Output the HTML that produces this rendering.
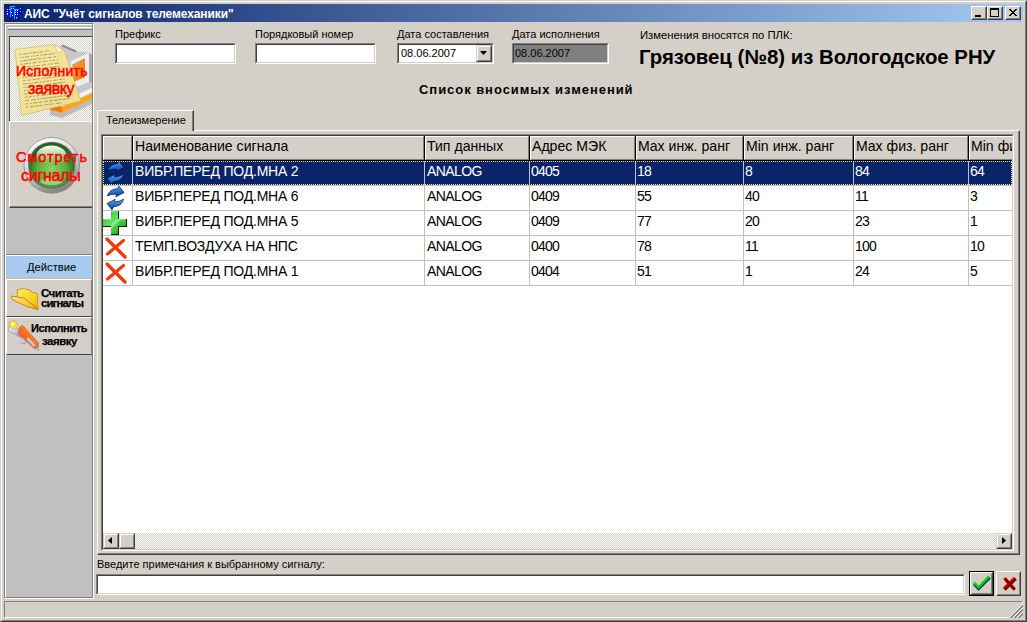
<!DOCTYPE html><html><head><meta charset="utf-8"><style>
*{margin:0;padding:0;box-sizing:border-box}
html,body{width:1027px;height:622px;overflow:hidden;background:#D4D0C8;font-family:"Liberation Sans",sans-serif;font-size:11px;color:#000;position:relative}
.a{position:absolute}
.t{position:absolute;white-space:pre;line-height:1}
.sunk{position:absolute;border:1px solid;border-color:#808080 #FFFFFF #FFFFFF #808080;background:#fff}
.sunk>i{position:absolute;left:0;top:0;right:0;bottom:0;border:1px solid;border-color:#404040 #D4D0C8 #D4D0C8 #404040}
.chk{background-color:#fff;background-image:repeating-conic-gradient(#D4D0C8 0 25%,#fff 0 50%);background-size:2px 2px}
.btn{position:absolute;background:#D4D0C8;border:1px solid;border-color:#FFFFFF #404040 #404040 #FFFFFF}
.btn>i{position:absolute;left:0;top:0;right:0;bottom:0;border:1px solid;border-color:#D4D0C8 #808080 #808080 #D4D0C8}
.g{position:absolute;white-space:pre;line-height:1;font-size:13.5px}
</style></head><body>
<div class="a" style="left:0px;top:0px;width:1027px;height:622px;border:1px solid;border-color:#D4D0C8 #404040 #404040 #D4D0C8"></div>
<div class="a" style="left:1px;top:1px;width:1025px;height:620px;border:1px solid;border-color:#FFFFFF #808080 #808080 #FFFFFF"></div>
<div class="a" style="left:4px;top:4px;width:1019px;height:18px;background:linear-gradient(to right,#0A246A,#A6CAF0)"></div>
<svg class="a" style="left:4px;top:4px" width="20" height="18" viewBox="0 0 20 18">
<rect x="13" y="3" width="4.5" height="8" fill="#0000E0"/>
<rect x="2" y="4" width="5" height="8" fill="#0010FF"/>
<rect x="6" y="2" width="5" height="11" fill="#0020FF"/>
<rect x="6" y="2" width="5" height="1" fill="#10C8FF"/><rect x="6" y="2" width="1" height="11" fill="#10A0FF"/>
<rect x="10" y="5" width="5" height="10" fill="#0010FF"/>
<rect x="10" y="5" width="5" height="1" fill="#10C8FF"/><rect x="10" y="5" width="1" height="10" fill="#3090FF"/>
<g fill="#FFE800">
<rect x="3" y="5" width="1" height="1"/><rect x="5" y="5" width="1" height="1"/><rect x="3" y="7" width="1" height="1"/><rect x="3" y="9" width="1" height="2"/>
<rect x="7" y="4" width="1" height="1"/><rect x="9" y="4" width="1" height="1"/><rect x="7" y="8" width="1" height="1"/><rect x="8" y="11" width="1" height="1"/>
<rect x="11" y="6" width="1" height="1"/><rect x="13" y="6" width="1" height="1"/><rect x="11" y="8" width="1" height="1"/><rect x="13" y="8" width="1" height="1"/><rect x="11" y="10" width="1" height="1"/><rect x="13" y="10" width="1" height="1"/><rect x="12" y="13" width="1" height="1.5"/>
<rect x="16" y="4" width="1" height="1"/><rect x="16" y="7" width="1" height="1"/>
</g></svg>
<div class="t" style="left:24px;top:8px;font-size:12px;font-weight:bold;color:#fff;letter-spacing:-0.1px">АИС "Учёт сигналов телемеханики"</div>
<div class="btn" style="left:971px;top:6px;width:16px;height:14px"><i></i></div>
<div class="btn" style="left:987px;top:6px;width:16px;height:14px"><i></i></div>
<div class="btn" style="left:1005px;top:6px;width:16px;height:14px"><i></i></div>
<div class="a" style="left:975px;top:15px;width:6px;height:2px;background:#000"></div>
<div class="a" style="left:990px;top:8px;width:9px;height:9px;border:1px solid #000;border-top-width:2px"></div>
<svg class="a" style="left:0;top:0" width="1027" height="30" shape-rendering="crispEdges"><path d="M1009 9h1v1h-1zM1010 9h1v1h-1zM1015 9h1v1h-1zM1016 9h1v1h-1zM1010 10h1v1h-1zM1011 10h1v1h-1zM1014 10h1v1h-1zM1015 10h1v1h-1zM1011 11h1v1h-1zM1012 11h1v1h-1zM1013 11h1v1h-1zM1014 11h1v1h-1zM1012 12h1v1h-1zM1013 12h1v1h-1zM1011 13h1v1h-1zM1012 13h1v1h-1zM1013 13h1v1h-1zM1014 13h1v1h-1zM1010 14h1v1h-1zM1011 14h1v1h-1zM1014 14h1v1h-1zM1015 14h1v1h-1zM1009 15h1v1h-1zM1010 15h1v1h-1zM1015 15h1v1h-1zM1016 15h1v1h-1z" fill="#000"/></svg>
<div class="a" style="left:4px;top:23px;width:90px;height:576px;border:1px solid;border-color:#808080 #FFFFFF #FFFFFF #808080"></div>
<div class="a" style="left:5px;top:24px;width:88px;height:574px;border:1px solid;border-color:#FFFFFF #808080 #808080 #FFFFFF;background:#C0C0C0"></div>
<div class="a" style="left:8px;top:27px;width:84px;height:3px;border-top:1px solid #fff;border-bottom:1px solid #808080;background:#D4D0C8"></div>
<div class="a" style="left:9px;top:36px;width:83px;height:86px;border-top:1px solid #404040;border-left:1px solid #404040;border-bottom:1px solid #fff;background-color:#fff;background-image:repeating-conic-gradient(#D4D0C8 0 25%,#fff 0 50%);background-size:2px 2px"></div>
<div class="a" style="left:9px;top:121px;width:83px;height:87px;background:#D4D0C8;border-top:1px solid #fff;border-left:1px solid #fff;border-bottom:1px solid #404040;box-shadow:inset 0 -1px #808080"></div>
<div class="a" style="left:6px;top:254px;width:86px;height:23px;border-top:1px solid #808080;background:#A6CAF0;box-shadow:inset 0 1px #fff"></div>
<div class="t" style="left:27px;top:262px;font-size:11.2px">Действие</div>
<div class="a" style="left:6px;top:279px;width:86px;height:38px;background:#D4D0C8;border-top:1px solid #fff;border-left:1px solid #fff;border-bottom:1px solid #404040;border-right:1px solid #808080"></div>
<div class="a" style="left:6px;top:317px;width:86px;height:38px;background:#D4D0C8;border-top:1px solid #fff;border-left:1px solid #fff;border-bottom:1px solid #404040;border-right:1px solid #808080"></div>
<svg class="a" style="left:9px;top:36px" width="83" height="86" viewBox="9 36 83 86">
<defs>
<linearGradient id="scr" x1="0" y1="0" x2="1" y2="1"><stop offset="0" stop-color="#FFB040"/><stop offset="1" stop-color="#E86A00"/></linearGradient>
<linearGradient id="mon" x1="0" y1="0" x2="1" y2="0"><stop offset="0" stop-color="#A8A8A8"/><stop offset="0.5" stop-color="#E8E8E8"/><stop offset="1" stop-color="#B0B0B0"/></linearGradient>
<linearGradient id="pap" x1="0" y1="0" x2="1" y2="1"><stop offset="0" stop-color="#F6E9A6"/><stop offset="1" stop-color="#EEDC88"/></linearGradient>
</defs>
<path d="M60 45 L76 51 L88 52 L92 54 L92 103 L62 117 L50 113 L50 100 Z" fill="#D4D4D4"/>
<path d="M61 45.5 L76 51.5 L87 52.5 L85 56 L71 62 L58 55 Z" fill="#C8C8C8"/>
<path d="M62 45.5 L76 51.5" stroke="#8C8C8C" stroke-width="2"/>
<path d="M71 61 L86 54 L89 53.5 L89 82 L72 89 Z" fill="#EEEEEE"/>
<path d="M72.5 65 L85 58.5 L85 77 L72.5 82.5 Z" fill="url(#scr)"/>
<path d="M72.5 65 L85 58.5" stroke="#505050" stroke-width="0.8" stroke-dasharray="1 1"/>
<path d="M89 53 L92 55 L92 82 L89 82 Z" fill="#A8A8A8"/>
<path d="M72 89 L89 82 L92 82 L92 88 L66 99 L58 96 Z" fill="#C8C8C8"/>
<path d="M58 103 L62 106 L92 92 L92 88 Z" fill="#F4F4F4"/>
<path d="M50 104 L62 107 L92 93 L92 99 L62 113 L50 110 Z" fill="#FFA418"/>
<path d="M50 104 L62 107 L62 113 L50 110 Z" fill="#F07A10"/>
<path d="M50 110 L62 113 L92 99 L92 104 L62 118 L50 115 Z" fill="#BCBCBC"/>
<path d="M15 49.5 L54.5 44.5 L64.5 51 L81 101 L21.5 115.5 Z" fill="url(#pap)" stroke="#C8B060" stroke-width="0.6"/>
<path d="M54.5 44.5 L57.5 53 L64.5 51 Z" fill="#FBF3CC" stroke="#C8B060" stroke-width="0.5"/>
<g stroke="#6E6040" stroke-width="1" opacity="0.55"><path d="M19.5 54.50 L22.0 54.19 M23.0 54.06 L26.0 53.69 M26.8 53.59 L28.3 53.40 M29.1 53.30 L31.6 52.99 M32.4 52.89 L36.4 52.39 M37.4 52.26 L38.9 52.08 M39.7 51.98 L42.7 51.60 M44.7 51.35 L46.2 51.16 M47.2 51.04 L48.7 50.85 M19.9 57.80 L21.4 57.61 M22.2 57.51 L24.2 57.26 M25.0 57.16 L29.0 56.66 M31.0 56.41 L32.5 56.22 M33.5 56.10 L35.0 55.91 M36.0 55.79 L38.5 55.47 M40.5 55.22 L42.5 54.97 M43.3 54.88 L47.3 54.38 M48.5 54.22 L52.5 53.72 M53.5 53.60 L55.0 53.41 M20.3 61.10 L22.8 60.79 M23.6 60.69 L27.6 60.19 M28.4 60.09 L32.4 59.59 M33.2 59.49 L37.2 58.99 M38.2 58.86 L41.2 58.49 M43.2 58.24 L45.7 57.93 M47.7 57.68 L51.7 57.18 M53.7 56.92 L56.2 56.61 M20.7 64.40 L22.7 64.15 M23.7 64.03 L28.7 63.40 M29.7 63.28 L31.2 63.09 M32.4 62.94 L36.4 62.44 M38.4 62.19 L40.9 61.88 M42.9 61.63 L45.4 61.31 M46.2 61.21 L47.7 61.03 M49.7 60.78 L51.7 60.53 M52.9 60.38 L54.9 60.13 M56.9 59.88 L58.1 59.72 M21.1 67.70 L26.1 67.08 M26.9 66.98 L30.9 66.48 M32.1 66.33 L34.6 66.01 M35.8 65.86 L39.8 65.36 M41.8 65.11 L45.8 64.61 M47.8 64.36 L49.3 64.17 M50.1 64.08 L52.6 63.76 M54.6 63.51 L59.2 62.94 M21.5 71.00 L23.0 70.81 M24.2 70.66 L29.2 70.04 M31.2 69.79 L33.7 69.47 M35.7 69.22 L40.7 68.60 M41.9 68.45 L43.4 68.26 M45.4 68.01 L47.9 67.70 M48.9 67.58 L52.9 67.08 M53.7 66.97 L56.7 66.60 M57.5 66.50 L59.5 66.25 M21.9 74.30 L23.9 74.05 M24.9 73.92 L27.9 73.55 M29.9 73.30 L32.9 72.92 M33.7 72.83 L35.7 72.58 M37.7 72.33 L40.7 71.95 M41.9 71.80 L43.9 71.55 M45.9 71.30 L49.9 70.80 M51.1 70.65 L56.1 70.02 M58.1 69.77 L60.6 69.46 M22.3 77.60 L24.3 77.35 M25.3 77.22 L26.8 77.04 M27.8 76.91 L29.8 76.66 M30.8 76.54 L35.8 75.91 M36.8 75.79 L38.3 75.60 M40.3 75.35 L44.3 74.85 M45.3 74.72 L47.8 74.41 M49.0 74.26 L50.5 74.07 M51.5 73.95 L54.5 73.57 M55.7 73.42 L59.7 72.92 M60.9 72.77 L62.4 72.59 M22.7 80.90 L25.7 80.53 M27.7 80.28 L30.7 79.90 M32.7 79.65 L35.7 79.28 M36.5 79.18 L39.5 78.80 M41.5 78.55 L43.0 78.36 M44.0 78.24 L45.5 78.05 M46.5 77.93 L49.5 77.55 M50.5 77.43 L52.0 77.24 M53.2 77.09 L57.2 76.59 M58.0 76.49 L59.5 76.30 M60.3 76.20 L63.4 75.81 M23.1 84.20 L27.1 83.70 M27.9 83.60 L30.4 83.29 M31.2 83.19 L32.7 83.00 M33.7 82.88 L37.7 82.38 M39.7 82.12 L41.7 81.88 M42.9 81.73 L45.4 81.41 M46.6 81.26 L49.6 80.89 M50.4 80.79 L51.9 80.60 M53.9 80.35 L56.9 79.98 M58.9 79.73 L61.9 79.35 M63.1 79.20 L64.5 79.03 M23.5 87.50 L25.0 87.31 M26.2 87.16 L31.2 86.54 M32.4 86.39 L35.4 86.01 M36.4 85.89 L40.4 85.39 M41.2 85.29 L43.2 85.04 M44.4 84.89 L46.4 84.64 M47.2 84.54 L51.2 84.04 M52.4 83.89 L57.4 83.26 M58.2 83.16 L63.2 82.54 M64.4 82.39 L65.5 82.25 M23.9 90.80 L25.9 90.55 M27.1 90.40 L29.1 90.15 M30.3 90.00 L35.3 89.38 M36.3 89.25 L40.3 88.75 M41.3 88.62 L43.3 88.38 M45.3 88.12 L50.3 87.50 M51.3 87.38 L53.3 87.12 M55.3 86.88 L57.8 86.56 M58.6 86.46 L60.1 86.27 M61.3 86.12 L64.3 85.75 M65.5 85.60 L66.5 85.47 M24.3 94.10 L27.3 93.72 M28.5 93.57 L31.0 93.26 M31.8 93.16 L33.8 92.91 M34.6 92.81 L36.6 92.56 M38.6 92.31 L40.6 92.06 M41.8 91.91 L43.8 91.66 M45.8 91.41 L49.8 90.91 M50.6 90.81 L53.6 90.44 M54.8 90.29 L59.8 89.66 M60.6 89.56 L65.6 88.94 M66.4 88.84 L67.6 88.69 M24.7 97.40 L27.7 97.03 M28.7 96.90 L31.7 96.53 M32.9 96.38 L34.4 96.19 M36.4 95.94 L39.4 95.56 M41.4 95.31 L46.4 94.69 M47.2 94.59 L52.2 93.96 M53.2 93.84 L55.2 93.59 M56.2 93.46 L57.7 93.28 M58.7 93.15 L62.7 92.65 M64.7 92.40 L68.7 91.91 M25.1 100.70 L29.1 100.20 M31.1 99.95 L36.1 99.32 M37.3 99.17 L39.3 98.92 M40.3 98.80 L41.8 98.61 M42.6 98.51 L47.6 97.89 M48.4 97.79 L52.4 97.29 M53.4 97.16 L56.4 96.79 M57.4 96.66 L59.4 96.41 M60.2 96.31 L62.7 96.00 M63.7 95.87 L66.2 95.56 M67.2 95.44 L69.7 95.12 M25.5 104.00 L28.0 103.69 M30.0 103.44 L32.0 103.19 M32.8 103.09 L37.8 102.46 M39.0 102.31 L42.0 101.94 M44.0 101.69 L48.0 101.19 M49.0 101.06 L53.0 100.56 M54.0 100.44 L58.0 99.94 M58.8 99.84 L61.8 99.46 M62.8 99.34 L66.8 98.84 M67.6 98.74 L69.6 98.49 M25.9 107.30 L27.9 107.05 M29.9 106.80 L33.9 106.30 M34.7 106.20 L38.7 105.70 M39.5 105.60 L42.0 105.29 M44.0 105.04 L45.5 104.85 M46.3 104.75 L48.3 104.50 M49.3 104.38 L51.8 104.06 M52.6 103.96 L54.1 103.78 M56.1 103.53 L60.1 103.03 M60.9 102.92 L62.0 102.79"/></g>
</svg>
<div class="t" style="left:16px;top:64px;font-size:14px;color:#FF0000;letter-spacing:0.25px;-webkit-text-stroke:0.5px #FF0000">Исполнить</div>
<div class="t" style="left:28px;top:81px;font-size:16px;color:#FF0000;letter-spacing:-0.4px;-webkit-text-stroke:0.5px #FF0000">заявку</div>
<svg class="a" style="left:9px;top:121px" width="83" height="87" viewBox="9 121 83 87">
<defs>
<linearGradient id="ring" x1="0.3" y1="0" x2="0.7" y2="1"><stop offset="0" stop-color="#FFFFFF"/><stop offset="0.5" stop-color="#D0D0D0"/><stop offset="1" stop-color="#787878"/></linearGradient>
<linearGradient id="ring2" x1="0.2" y1="0" x2="0.8" y2="1"><stop offset="0" stop-color="#808080"/><stop offset="1" stop-color="#F0F0F0"/></linearGradient>
<radialGradient id="grn" cx="0.5" cy="0.6" r="0.55"><stop offset="0" stop-color="#86D466"/><stop offset="0.6" stop-color="#5AAE3A"/><stop offset="1" stop-color="#22621A"/></radialGradient>
<linearGradient id="hl" x1="0" y1="0" x2="0" y2="1"><stop offset="0" stop-color="#FFFFFF" stop-opacity="1"/><stop offset="0.35" stop-color="#E0F4D8" stop-opacity="0.8"/><stop offset="1" stop-color="#A8E090" stop-opacity="0"/></linearGradient>
</defs>
<circle cx="51.75" cy="165.25" r="28.2" fill="url(#ring)"/>
<circle cx="51.75" cy="165.25" r="27.8" fill="none" stroke="#8C8C8C" stroke-width="0.9"/>
<circle cx="51.75" cy="165.25" r="23.6" fill="#6A6A6A"/>
<circle cx="51.75" cy="165.25" r="22.4" fill="url(#grn)"/>
<ellipse cx="51.5" cy="155.5" rx="15" ry="10" fill="url(#hl)"/>
<ellipse cx="51.5" cy="181.5" rx="11" ry="3.5" fill="#D8F4C8" opacity="0.5"/>
</svg>
<div class="t" style="left:16px;top:150px;font-size:14.5px;color:#FF0000;letter-spacing:0.9px;-webkit-text-stroke:0.5px #FF0000">Смотреть</div>
<div class="t" style="left:21px;top:168px;font-size:16px;color:#FF0000;letter-spacing:-0.25px;-webkit-text-stroke:0.5px #FF0000">сигналы</div>
<svg class="a" style="left:9px;top:286px" width="32" height="26" viewBox="9 286 32 26">
<defs><linearGradient id="fol" x1="0" y1="0" x2="1" y2="1"><stop offset="0" stop-color="#FFF060"/><stop offset="0.6" stop-color="#F8D020"/><stop offset="1" stop-color="#F0B000"/></linearGradient>
<linearGradient id="fol2" x1="0" y1="0" x2="1" y2="0.5"><stop offset="0" stop-color="#FFE880"/><stop offset="1" stop-color="#F4C020"/></linearGradient></defs>
<path d="M17 290 L23 288.5 L30 290 L31 292 L37.5 293.5 L38 310 L28 306 L17.5 297 Z" fill="url(#fol)" stroke="#C88020" stroke-width="0.8"/>
<path d="M11 296 L24 298 L30 303 L36 306.5 L37 308.5 L28 307 L17 302 L12 299 Z" fill="url(#fol2)" stroke="#C07010" stroke-width="0.8"/>
</svg>
<div class="t" style="left:41px;top:288px;font-size:11.5px;font-weight:bold;letter-spacing:-0.6px;-webkit-text-stroke:0.25px #000">Считать</div>
<div class="t" style="left:41px;top:298px;font-size:11.5px;font-weight:bold;letter-spacing:-0.95px;-webkit-text-stroke:0.25px #000">сигналы</div>
<svg class="a" style="left:8px;top:320px" width="34" height="32" viewBox="8 320 34 32">
<defs><linearGradient id="pen" x1="0" y1="1" x2="1" y2="0"><stop offset="0" stop-color="#E04800"/><stop offset="0.5" stop-color="#FF7020"/><stop offset="1" stop-color="#FFA060"/></linearGradient>
<linearGradient id="cap" x1="0" y1="0" x2="1" y2="1"><stop offset="0" stop-color="#E8E8F8"/><stop offset="1" stop-color="#A0A0C8"/></linearGradient></defs>
<path d="M11.5 329 L21 334.5" stroke="#9090B0" stroke-width="6.5" stroke-linecap="round"/>
<path d="M11.5 329 L21 334.5" stroke="url(#cap)" stroke-width="5.3" stroke-linecap="round"/>
<ellipse cx="23" cy="341.5" rx="3" ry="2.5" fill="url(#cap)" stroke="#9090B0" stroke-width="0.5"/>
<path d="M19.5 327.5 L22.4 325.2 L38.5 343 L38.2 347.2 L34.2 348.6 L18.2 333.3 Z" fill="url(#pen)" stroke="#C03800" stroke-width="0.5"/>
<path d="M28 339 L33.8 345" stroke="#C4C4E4" stroke-width="2.6" stroke-linecap="round"/>
<path d="M34.2 348.6 L38.2 347.2 L39.2 351 Z" fill="#A0A0B8"/>
<circle cx="13.5" cy="325" r="4.1" fill="#F0E048" stroke="#C8A030" stroke-width="0.6"/>
<circle cx="12.5" cy="324" r="2" fill="#FFF8A8"/>
</svg>
<div class="t" style="left:31px;top:323px;font-size:11px;font-weight:bold;letter-spacing:-0.4px;-webkit-text-stroke:0.25px #000">Исполнить</div>
<div class="t" style="left:42px;top:336px;font-size:11.5px;font-weight:bold;letter-spacing:-0.5px;-webkit-text-stroke:0.25px #000">заявку</div>
<div class="t" style="left:115px;top:29px;">Префикс</div>
<div class="sunk" style="left:115px;top:43px;width:121px;height:21px"><i></i></div>
<div class="t" style="left:255px;top:29px;">Порядковый номер</div>
<div class="sunk" style="left:255px;top:43px;width:121px;height:21px"><i></i></div>
<div class="t" style="left:397px;top:29px;">Дата составления</div>
<div class="sunk" style="left:397px;top:43px;width:97px;height:21px"><i></i></div>
<div class="t" style="left:401px;top:48px;">08.06.2007</div>
<div class="btn" style="left:476px;top:45px;width:16px;height:17px;border-color:#D4D0C8 #404040 #404040 #D4D0C8"><i style="border-color:#fff #808080 #808080 #fff"></i></div>
<svg class="a" style="left:476px;top:45px" width="16" height="17"><path d="M4 6 h7 l-3.5 4 z" fill="#000"/></svg>
<div class="t" style="left:512px;top:29px;">Дата исполнения</div>
<div class="sunk" style="left:512px;top:43px;width:97px;height:21px;background:#808080"><i></i></div>
<div class="t" style="left:515px;top:48px;">08.06.2007</div>
<div class="t" style="left:640px;top:30px;font-size:11.3px">Изменения вносятся по ПЛК:</div>
<div class="t" style="left:639px;top:47px;font-size:20.35px;font-weight:bold">Грязовец (№8) из Вологодское РНУ</div>
<div class="t" style="left:419px;top:83px;font-size:13px;font-weight:bold;letter-spacing:0.95px">Список вносимых изменений</div>
<div class="a" style="left:97px;top:130px;width:923px;height:425px;border:1px solid;border-color:#fff #404040 #404040 #fff;box-shadow:inset -1px -1px #808080"></div>
<div class="a" style="left:97px;top:110px;width:97px;height:21px;background:#D4D0C8;border:1px solid;border-color:#fff #404040 transparent #fff;border-bottom:0;box-shadow:inset -1px 0 #808080;border-top-left-radius:2px"></div>
<div class="t" style="left:106px;top:115px;">Телеизмерение</div>
<div class="a" style="left:101px;top:134px;width:913px;height:417px;border:1px solid;border-color:#808080 #fff #fff #808080"></div>
<div class="a" style="left:102px;top:135px;width:911px;height:415px;border:1px solid;border-color:#404040 #D4D0C8 #D4D0C8 #404040;background:#fff;overflow:hidden">
<div class="a" style="left:0px;top:0px;width:940px;height:25px;background:#D4D0C8"></div>
<div class="a" style="left:0px;top:0px;width:29px;height:24px;border-top:1px solid #fff;border-left:1px solid #fff;border-bottom:1px solid #808080;border-right:1px solid #808080"></div>
<div class="a" style="left:30px;top:0px;width:291px;height:24px;border-top:1px solid #fff;border-left:1px solid #fff;border-bottom:1px solid #808080;border-right:1px solid #808080"></div>
<div class="a" style="left:322px;top:0px;width:104px;height:24px;border-top:1px solid #fff;border-left:1px solid #fff;border-bottom:1px solid #808080;border-right:1px solid #808080"></div>
<div class="a" style="left:427px;top:0px;width:105px;height:24px;border-top:1px solid #fff;border-left:1px solid #fff;border-bottom:1px solid #808080;border-right:1px solid #808080"></div>
<div class="a" style="left:533px;top:0px;width:107px;height:24px;border-top:1px solid #fff;border-left:1px solid #fff;border-bottom:1px solid #808080;border-right:1px solid #808080"></div>
<div class="a" style="left:641px;top:0px;width:109px;height:24px;border-top:1px solid #fff;border-left:1px solid #fff;border-bottom:1px solid #808080;border-right:1px solid #808080"></div>
<div class="a" style="left:751px;top:0px;width:114px;height:24px;border-top:1px solid #fff;border-left:1px solid #fff;border-bottom:1px solid #808080;border-right:1px solid #808080"></div>
<div class="a" style="left:866px;top:0px;width:71px;height:24px;border-top:1px solid #fff;border-left:1px solid #fff;border-bottom:1px solid #808080;border-right:1px solid #808080"></div>
<div class="a" style="left:0px;top:24px;width:940px;height:1px;background:#000"></div>
<div class="a" style="left:29px;top:0px;width:1px;height:25px;background:#000"></div>
<div class="a" style="left:321px;top:0px;width:1px;height:25px;background:#000"></div>
<div class="a" style="left:426px;top:0px;width:1px;height:25px;background:#000"></div>
<div class="a" style="left:532px;top:0px;width:1px;height:25px;background:#000"></div>
<div class="a" style="left:640px;top:0px;width:1px;height:25px;background:#000"></div>
<div class="a" style="left:750px;top:0px;width:1px;height:25px;background:#000"></div>
<div class="a" style="left:865px;top:0px;width:1px;height:25px;background:#000"></div>
<div class="g" style="left:32px;top:3px;font-size:14.1px">Наименование сигнала</div>
<div class="g" style="left:324px;top:3px;font-size:14.1px">Тип данных</div>
<div class="g" style="left:429px;top:3px;font-size:14.1px">Адрес МЭК</div>
<div class="g" style="left:535px;top:3px;font-size:14.1px">Max инж. ранг</div>
<div class="g" style="left:643px;top:3px;font-size:14.1px">Min инж. ранг</div>
<div class="g" style="left:753px;top:3px;font-size:14.1px">Max физ. ранг</div>
<div class="g" style="left:868px;top:3px;font-size:14.1px">Min физ. ранг</div>
<div class="a" style="left:0px;top:25px;width:940px;height:24px;background:#0A246A"></div>
<div class="a" style="left:0px;top:49px;width:940px;height:1px;background:#C0C0C0"></div>
<div class="a" style="left:29px;top:25px;width:1px;height:25px;background:#C0C0C0"></div>
<div class="a" style="left:321px;top:25px;width:1px;height:25px;background:#C0C0C0"></div>
<div class="a" style="left:426px;top:25px;width:1px;height:25px;background:#C0C0C0"></div>
<div class="a" style="left:532px;top:25px;width:1px;height:25px;background:#C0C0C0"></div>
<div class="a" style="left:640px;top:25px;width:1px;height:25px;background:#C0C0C0"></div>
<div class="a" style="left:750px;top:25px;width:1px;height:25px;background:#C0C0C0"></div>
<div class="a" style="left:865px;top:25px;width:1px;height:25px;background:#C0C0C0"></div>
<div class="g" style="left:32px;top:28px;color:#fff;font-size:14px;letter-spacing:-0.2px">ВИБР.ПЕРЕД ПОД.МНА 2</div>
<div class="g" style="left:324px;top:28px;color:#fff;font-size:14px;letter-spacing:-0.6px">ANALOG</div>
<div class="g" style="left:428px;top:28px;color:#fff;font-size:14px;letter-spacing:-0.75px">0405</div>
<div class="g" style="left:534px;top:28px;color:#fff;font-size:14px;letter-spacing:-0.75px">18</div>
<div class="g" style="left:642px;top:28px;color:#fff;font-size:14px;letter-spacing:-0.75px">8</div>
<div class="g" style="left:752px;top:28px;color:#fff;font-size:14px;letter-spacing:-0.75px">84</div>
<div class="g" style="left:867px;top:28px;color:#fff;font-size:14px;letter-spacing:-0.75px">64</div>
<svg class="a" style="left:1px;top:24px" width="24" height="26" viewBox="0 0 24 26"><defs><linearGradient id="bl0" x1="0" y1="0" x2="0.3" y2="1"><stop offset="0" stop-color="#88D4FF"/><stop offset="0.4" stop-color="#3A88EC"/><stop offset="1" stop-color="#0C44B0"/></linearGradient><linearGradient id="bm0" x1="0" y1="0" x2="0" y2="1"><stop offset="0" stop-color="#80D0FF"/><stop offset="0.35" stop-color="#3484EA"/><stop offset="1" stop-color="#0A40A8"/></linearGradient></defs><path d="M3.5 11 C4.5 6.5 8.5 4 13.5 3.8 L15 1.2 L20 7.5 L11.8 11.8 L12.8 9.3 C9.5 9 6 9.5 3.5 11 Z" fill="url(#bl0)" stroke="#081028" stroke-width="0.9" stroke-opacity="0.8"/><path d="M19.5 14 C18.5 19 14.5 21.5 9.5 21.7 L8 24.8 L3 18.5 L11.2 14.2 L10.2 16.7 C13.5 17 17 16 19.5 14 Z" fill="url(#bm0)" stroke="#081028" stroke-width="0.9" stroke-opacity="0.8"/></svg>
<div class="a" style="left:0px;top:74px;width:940px;height:1px;background:#C0C0C0"></div>
<div class="a" style="left:29px;top:50px;width:1px;height:25px;background:#C0C0C0"></div>
<div class="a" style="left:321px;top:50px;width:1px;height:25px;background:#C0C0C0"></div>
<div class="a" style="left:426px;top:50px;width:1px;height:25px;background:#C0C0C0"></div>
<div class="a" style="left:532px;top:50px;width:1px;height:25px;background:#C0C0C0"></div>
<div class="a" style="left:640px;top:50px;width:1px;height:25px;background:#C0C0C0"></div>
<div class="a" style="left:750px;top:50px;width:1px;height:25px;background:#C0C0C0"></div>
<div class="a" style="left:865px;top:50px;width:1px;height:25px;background:#C0C0C0"></div>
<div class="g" style="left:32px;top:53px;color:#000;font-size:14px;letter-spacing:-0.2px">ВИБР.ПЕРЕД ПОД.МНА 6</div>
<div class="g" style="left:324px;top:53px;color:#000;font-size:14px;letter-spacing:-0.6px">ANALOG</div>
<div class="g" style="left:428px;top:53px;color:#000;font-size:14px;letter-spacing:-0.75px">0409</div>
<div class="g" style="left:534px;top:53px;color:#000;font-size:14px;letter-spacing:-0.75px">55</div>
<div class="g" style="left:642px;top:53px;color:#000;font-size:14px;letter-spacing:-0.75px">40</div>
<div class="g" style="left:752px;top:53px;color:#000;font-size:14px;letter-spacing:-0.75px">11</div>
<div class="g" style="left:867px;top:53px;color:#000;font-size:14px;letter-spacing:-0.75px">3</div>
<svg class="a" style="left:1px;top:49px" width="24" height="26" viewBox="0 0 24 26"><defs><linearGradient id="bl1" x1="0" y1="0" x2="0.3" y2="1"><stop offset="0" stop-color="#88D4FF"/><stop offset="0.4" stop-color="#3A88EC"/><stop offset="1" stop-color="#0C44B0"/></linearGradient><linearGradient id="bm1" x1="0" y1="0" x2="0" y2="1"><stop offset="0" stop-color="#80D0FF"/><stop offset="0.35" stop-color="#3484EA"/><stop offset="1" stop-color="#0A40A8"/></linearGradient></defs><path d="M3.5 11 C4.5 6.5 8.5 4 13.5 3.8 L15 1.2 L20 7.5 L11.8 11.8 L12.8 9.3 C9.5 9 6 9.5 3.5 11 Z" fill="url(#bl1)" stroke="#081028" stroke-width="0.9" stroke-opacity="0.8"/><path d="M19.5 14 C18.5 19 14.5 21.5 9.5 21.7 L8 24.8 L3 18.5 L11.2 14.2 L10.2 16.7 C13.5 17 17 16 19.5 14 Z" fill="url(#bm1)" stroke="#081028" stroke-width="0.9" stroke-opacity="0.8"/></svg>
<div class="a" style="left:0px;top:99px;width:940px;height:1px;background:#C0C0C0"></div>
<div class="a" style="left:29px;top:75px;width:1px;height:25px;background:#C0C0C0"></div>
<div class="a" style="left:321px;top:75px;width:1px;height:25px;background:#C0C0C0"></div>
<div class="a" style="left:426px;top:75px;width:1px;height:25px;background:#C0C0C0"></div>
<div class="a" style="left:532px;top:75px;width:1px;height:25px;background:#C0C0C0"></div>
<div class="a" style="left:640px;top:75px;width:1px;height:25px;background:#C0C0C0"></div>
<div class="a" style="left:750px;top:75px;width:1px;height:25px;background:#C0C0C0"></div>
<div class="a" style="left:865px;top:75px;width:1px;height:25px;background:#C0C0C0"></div>
<div class="g" style="left:32px;top:78px;color:#000;font-size:14px;letter-spacing:-0.2px">ВИБР.ПЕРЕД ПОД.МНА 5</div>
<div class="g" style="left:324px;top:78px;color:#000;font-size:14px;letter-spacing:-0.6px">ANALOG</div>
<div class="g" style="left:428px;top:78px;color:#000;font-size:14px;letter-spacing:-0.75px">0409</div>
<div class="g" style="left:534px;top:78px;color:#000;font-size:14px;letter-spacing:-0.75px">77</div>
<div class="g" style="left:642px;top:78px;color:#000;font-size:14px;letter-spacing:-0.75px">20</div>
<div class="g" style="left:752px;top:78px;color:#000;font-size:14px;letter-spacing:-0.75px">23</div>
<div class="g" style="left:867px;top:78px;color:#000;font-size:14px;letter-spacing:-0.75px">1</div>
<svg class="a" style="left:0px;top:75px" width="29" height="24" viewBox="0 0 29 24"><defs><linearGradient id="gp" x1="0" y1="0" x2="1" y2="1"><stop offset="0" stop-color="#28C828"/><stop offset="0.45" stop-color="#60E060"/><stop offset="0.52" stop-color="#90F090"/><stop offset="0.6" stop-color="#40D040"/><stop offset="1" stop-color="#08A008"/></linearGradient></defs><path d="M8 0 H16 V8 H24 V16 H16 V24 H8 V16 H0 V8 H8 Z" fill="#101810"/><path d="M8 0 H15 V8 H23 V15 H15 V23 H8 V15 H0 V8 H8 Z" fill="url(#gp)"/><path d="M8.5 0.5 H14.5 M0.5 8.5 H8.5 M15 8.5 H22.5" stroke="#A0F0A0" stroke-width="1" opacity="0.6"/></svg>
<div class="a" style="left:0px;top:124px;width:940px;height:1px;background:#C0C0C0"></div>
<div class="a" style="left:29px;top:100px;width:1px;height:25px;background:#C0C0C0"></div>
<div class="a" style="left:321px;top:100px;width:1px;height:25px;background:#C0C0C0"></div>
<div class="a" style="left:426px;top:100px;width:1px;height:25px;background:#C0C0C0"></div>
<div class="a" style="left:532px;top:100px;width:1px;height:25px;background:#C0C0C0"></div>
<div class="a" style="left:640px;top:100px;width:1px;height:25px;background:#C0C0C0"></div>
<div class="a" style="left:750px;top:100px;width:1px;height:25px;background:#C0C0C0"></div>
<div class="a" style="left:865px;top:100px;width:1px;height:25px;background:#C0C0C0"></div>
<div class="g" style="left:32px;top:103px;color:#000;font-size:14px;letter-spacing:-0.2px">ТЕМП.ВОЗДУХА НА НПС</div>
<div class="g" style="left:324px;top:103px;color:#000;font-size:14px;letter-spacing:-0.6px">ANALOG</div>
<div class="g" style="left:428px;top:103px;color:#000;font-size:14px;letter-spacing:-0.75px">0400</div>
<div class="g" style="left:534px;top:103px;color:#000;font-size:14px;letter-spacing:-0.75px">78</div>
<div class="g" style="left:642px;top:103px;color:#000;font-size:14px;letter-spacing:-0.75px">11</div>
<div class="g" style="left:752px;top:103px;color:#000;font-size:14px;letter-spacing:-0.75px">100</div>
<div class="g" style="left:867px;top:103px;color:#000;font-size:14px;letter-spacing:-0.75px">10</div>
<svg class="a" style="left:0px;top:100px" width="29" height="24" viewBox="0 0 29 24"><path d="M4 3 L22 21" stroke="#F03A0A" stroke-width="3.4" stroke-linecap="round"/><path d="M20.5 4.5 L4.5 18" stroke="#F03A0A" stroke-width="3.2" stroke-linecap="round"/></svg>
<div class="a" style="left:0px;top:149px;width:940px;height:1px;background:#C0C0C0"></div>
<div class="a" style="left:29px;top:125px;width:1px;height:25px;background:#C0C0C0"></div>
<div class="a" style="left:321px;top:125px;width:1px;height:25px;background:#C0C0C0"></div>
<div class="a" style="left:426px;top:125px;width:1px;height:25px;background:#C0C0C0"></div>
<div class="a" style="left:532px;top:125px;width:1px;height:25px;background:#C0C0C0"></div>
<div class="a" style="left:640px;top:125px;width:1px;height:25px;background:#C0C0C0"></div>
<div class="a" style="left:750px;top:125px;width:1px;height:25px;background:#C0C0C0"></div>
<div class="a" style="left:865px;top:125px;width:1px;height:25px;background:#C0C0C0"></div>
<div class="g" style="left:32px;top:128px;color:#000;font-size:14px;letter-spacing:-0.2px">ВИБР.ПЕРЕД ПОД.МНА 1</div>
<div class="g" style="left:324px;top:128px;color:#000;font-size:14px;letter-spacing:-0.6px">ANALOG</div>
<div class="g" style="left:428px;top:128px;color:#000;font-size:14px;letter-spacing:-0.75px">0404</div>
<div class="g" style="left:534px;top:128px;color:#000;font-size:14px;letter-spacing:-0.75px">51</div>
<div class="g" style="left:642px;top:128px;color:#000;font-size:14px;letter-spacing:-0.75px">1</div>
<div class="g" style="left:752px;top:128px;color:#000;font-size:14px;letter-spacing:-0.75px">24</div>
<div class="g" style="left:867px;top:128px;color:#000;font-size:14px;letter-spacing:-0.75px">5</div>
<svg class="a" style="left:0px;top:125px" width="29" height="24" viewBox="0 0 29 24"><path d="M4 3 L22 21" stroke="#F03A0A" stroke-width="3.4" stroke-linecap="round"/><path d="M20.5 4.5 L4.5 18" stroke="#F03A0A" stroke-width="3.2" stroke-linecap="round"/></svg>
<div class="a" style="left:0px;top:25px;width:909px;height:24px;border:1px dotted #F5DB95"></div>
<div class="a" style="left:0px;top:397px;width:909px;height:16px;background-color:#fff;background-image:repeating-conic-gradient(#D4D0C8 0 25%,#fff 0 50%);background-size:2px 2px"></div>
</div>
<div class="btn" style="left:103px;top:533px;width:16px;height:16px;border-color:#D4D0C8 #404040 #404040 #D4D0C8"><i style="border-color:#fff #808080 #808080 #fff"></i></div>
<div class="btn" style="left:119px;top:533px;width:16px;height:16px;border-color:#D4D0C8 #404040 #404040 #D4D0C8"><i style="border-color:#fff #808080 #808080 #fff"></i></div>
<div class="btn" style="left:996px;top:533px;width:16px;height:16px;border-color:#D4D0C8 #404040 #404040 #D4D0C8"><i style="border-color:#fff #808080 #808080 #fff"></i></div>
<svg class="a" style="left:103px;top:533px" width="16" height="16"><path d="M9 4 v7 l-4 -3.5 z" fill="#000"/></svg>
<svg class="a" style="left:996px;top:533px" width="16" height="16"><path d="M6 4 v7 l4 -3.5 z" fill="#000"/></svg>
<div class="t" style="left:97px;top:559px;">Введите примечания к выбранному сигналу:</div>
<div class="sunk" style="left:96px;top:574px;width:869px;height:21px"><i></i></div>
<div class="a" style="left:969px;top:571px;width:25px;height:25px;border:1px solid #000"></div>
<div class="btn" style="left:970px;top:572px;width:23px;height:23px;border-color:#fff #404040 #404040 #fff"><i style="border-color:#D4D0C8 #808080 #808080 #D4D0C8"></i></div>
<div class="btn" style="left:996px;top:571px;width:25px;height:25px"><i></i></div>
<svg class="a" style="left:969px;top:571px" width="25" height="25" viewBox="969 571 25 25"><path d="M974 584.2 L978.6 588.8 L989.8 577.6" stroke="#000080" stroke-width="2.6" fill="none"/><path d="M974 582.8 L978.6 587.4 L989.2 576.6" stroke="#00C800" stroke-width="2.8" fill="none"/><path d="M973.8 582 L978.6 586.5 L988.8 576" stroke="#00FF00" stroke-width="0.9" fill="none" opacity="0.7"/></svg>
<svg class="a" style="left:996px;top:571px" width="25" height="25" viewBox="996 571 25 25"><path d="M1005 578.8 L1014.5 589.5 M1015.5 578.5 L1004.5 589.5" stroke="#FF0000" stroke-width="3" transform="translate(-0.7,-0.7)"/><path d="M1005.3 579 L1014.8 589.8 M1015.8 578.8 L1004.8 589.8" stroke="#800000" stroke-width="3"/></svg>
<div class="a" style="left:4px;top:601px;width:1019px;height:17px;border:1px solid;border-color:#808080 #fff #fff #808080"></div>
<svg class="a" style="left:0;top:0" width="1027" height="622" shape-rendering="crispEdges"><path d="M1008 617h1v1h-1zM1009 616h1v1h-1zM1010 615h1v1h-1zM1011 614h1v1h-1zM1012 613h1v1h-1zM1012 617h1v1h-1zM1013 612h1v1h-1zM1013 616h1v1h-1zM1014 611h1v1h-1zM1014 615h1v1h-1zM1015 610h1v1h-1zM1015 614h1v1h-1zM1016 609h1v1h-1zM1016 613h1v1h-1zM1016 617h1v1h-1zM1017 608h1v1h-1zM1017 612h1v1h-1zM1017 616h1v1h-1zM1018 607h1v1h-1zM1018 611h1v1h-1zM1018 615h1v1h-1zM1019 606h1v1h-1zM1019 610h1v1h-1zM1019 614h1v1h-1zM1020 605h1v1h-1zM1020 609h1v1h-1zM1020 613h1v1h-1zM1020 617h1v1h-1zM1021 604h1v1h-1zM1021 608h1v1h-1zM1021 612h1v1h-1zM1021 616h1v1h-1zM1021 617h1v1h-1zM1022 603h1v1h-1zM1022 607h1v1h-1zM1022 611h1v1h-1zM1022 615h1v1h-1zM1022 616h1v1h-1zM1022 617h1v1h-1z" fill="#D4D0C8"/><path d="M1009 617h1v1h-1zM1010 616h1v1h-1zM1011 615h1v1h-1zM1012 614h1v1h-1zM1013 613h1v1h-1zM1013 617h1v1h-1zM1014 612h1v1h-1zM1014 616h1v1h-1zM1015 611h1v1h-1zM1015 615h1v1h-1zM1016 610h1v1h-1zM1016 614h1v1h-1zM1017 609h1v1h-1zM1017 613h1v1h-1zM1017 617h1v1h-1zM1018 608h1v1h-1zM1018 612h1v1h-1zM1018 616h1v1h-1zM1019 607h1v1h-1zM1019 611h1v1h-1zM1019 615h1v1h-1zM1020 606h1v1h-1zM1020 610h1v1h-1zM1020 614h1v1h-1zM1021 605h1v1h-1zM1021 609h1v1h-1zM1021 613h1v1h-1zM1022 604h1v1h-1zM1022 608h1v1h-1zM1022 612h1v1h-1z" fill="#FFFFFF"/><path d="M1010 617h1v1h-1zM1011 616h1v1h-1zM1011 617h1v1h-1zM1012 615h1v1h-1zM1012 616h1v1h-1zM1013 614h1v1h-1zM1013 615h1v1h-1zM1014 613h1v1h-1zM1014 614h1v1h-1zM1014 617h1v1h-1zM1015 612h1v1h-1zM1015 613h1v1h-1zM1015 616h1v1h-1zM1015 617h1v1h-1zM1016 611h1v1h-1zM1016 612h1v1h-1zM1016 615h1v1h-1zM1016 616h1v1h-1zM1017 610h1v1h-1zM1017 611h1v1h-1zM1017 614h1v1h-1zM1017 615h1v1h-1zM1018 609h1v1h-1zM1018 610h1v1h-1zM1018 613h1v1h-1zM1018 614h1v1h-1zM1018 617h1v1h-1zM1019 608h1v1h-1zM1019 609h1v1h-1zM1019 612h1v1h-1zM1019 613h1v1h-1zM1019 616h1v1h-1zM1019 617h1v1h-1zM1020 607h1v1h-1zM1020 608h1v1h-1zM1020 611h1v1h-1zM1020 612h1v1h-1zM1020 615h1v1h-1zM1020 616h1v1h-1zM1021 606h1v1h-1zM1021 607h1v1h-1zM1021 610h1v1h-1zM1021 611h1v1h-1zM1021 614h1v1h-1zM1021 615h1v1h-1zM1022 605h1v1h-1zM1022 606h1v1h-1zM1022 609h1v1h-1zM1022 610h1v1h-1zM1022 613h1v1h-1zM1022 614h1v1h-1z" fill="#808080"/></svg>
</body></html>
